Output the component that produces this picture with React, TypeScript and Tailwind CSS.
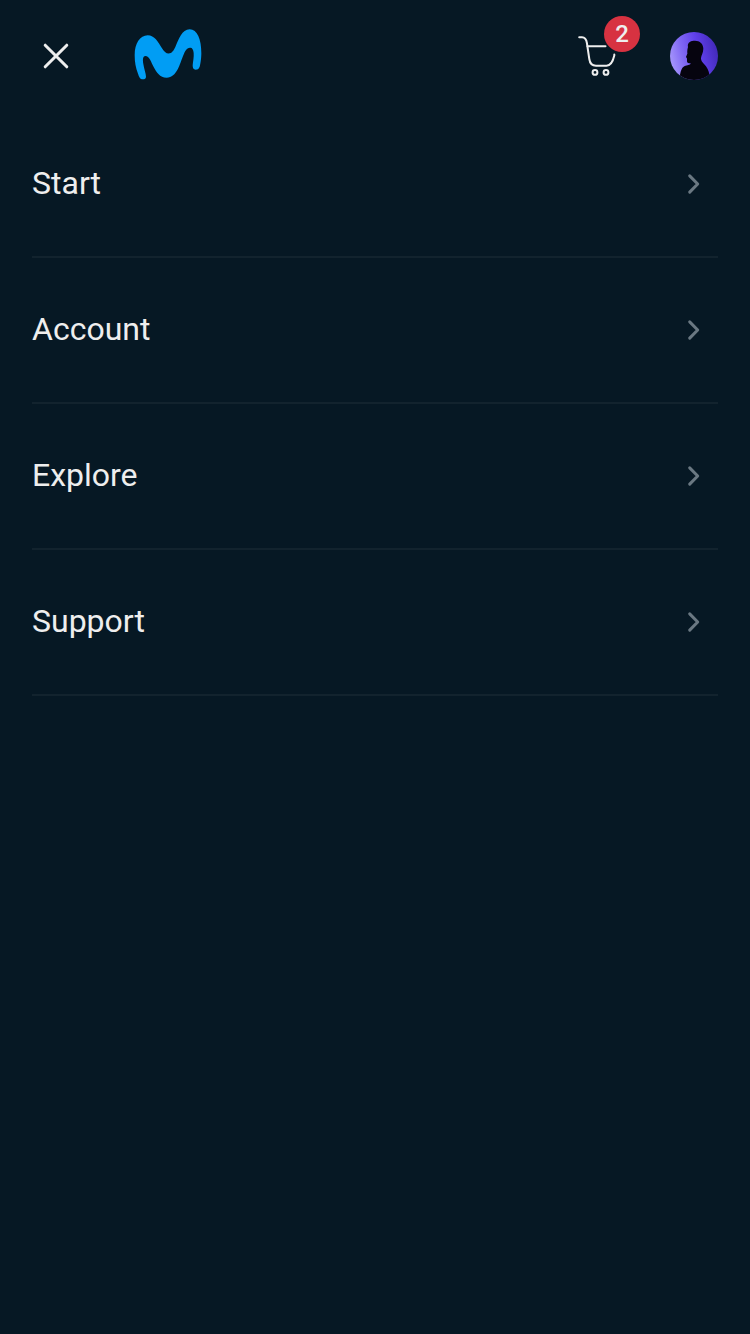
const items = ["Start", "Account", "Explore", "Support"];

function CloseIcon() {
  return (
    <svg width="48" height="48" viewBox="0 0 48 48" fill="none" stroke="#eeeeee" strokeWidth="3" strokeLinecap="round">
      <path d="M13.2 13.2 34.8 34.8M34.8 13.2 13.2 34.8" />
    </svg>
  );
}

function Logo() {
  return (
    <svg width="86" height="70" viewBox="0 0 258 210" fill="#019df4">
      <path d="M68 46C89 46 99 66 110 83C117 94 123 100.5 131 100.5C140 100.5 146 92 151 81C161 58 171 28 194 28C217 28 229 58 229 99C229 116 226 133 224 140C221 147 217 149 212 149C205 149 203 144 203 136C204 124 207 111 206 99C205 88 201 82 195 83C184 84 180 94 175 106C164 132 156 173 125 173C104 173 95 157 86 141C79 128 73 108 61 108C53 109 53 119 55 132C57 147 63 160 63 170C63 176 59 178 54 178C45 178 42 170 39 161C32 143 29 127 29 105C29 71 45 46 68 46Z" />
    </svg>
  );
}

function CartIcon() {
  return (
    <svg width="48" height="48" viewBox="0 0 48 48" fill="none" stroke="#eeeeee" strokeWidth="2" strokeLinecap="round" strokeLinejoin="round">
      <path d="M5.2 5.3H8C11.5 5.3 12.4 7.8 12.9 11L15.3 27C15.9 31.5 18 33.7 22 33.7H32.5C37 33.7 38.8 30 40.3 23.5V22.5" />
      <path d="M13.5 14.3H31.5" />
      <circle cx="21" cy="40.4" r="2.4" />
      <circle cx="32" cy="40.4" r="2.4" />
    </svg>
  );
}

function Avatar() {
  return (
    <svg width="48" height="48" viewBox="0 0 48 48">
      <defs>
        <linearGradient id="glow" x1="0" y1="0.65" x2="1" y2="0.4">
          <stop offset="0" stopColor="#a898fc" />
          <stop offset="0.3" stopColor="#8068f4" />
          <stop offset="0.62" stopColor="#6040ea" />
          <stop offset="1" stopColor="#4229b8" />
        </linearGradient>
        <clipPath id="disc">
          <circle cx="24" cy="24" r="24" />
        </clipPath>
      </defs>
      <g clipPath="url(#disc)">
        <rect width="48" height="48" fill="url(#glow)" />
        <path
          d="M18 15C17 10.5 20.5 8.7 25 8.7C30 8.7 33.5 12 33.3 17C33.2 21 31.3 23 31 26C30.9 28.5 32 29.8 34 32C37 35 38.5 38 39.5 43V49H10V43C11 38 12 35 15.5 33.8C18.5 32.8 20.5 33 20.7 31.3C18.8 31.3 17.2 31.2 17 29.5L17 26.5L16 25L17.4 21.5C17 19 17.4 17 18 15Z"
          fill="#06040f"
        />
      </g>
    </svg>
  );
}

function Chevron() {
  return (
    <svg width="48" height="48" viewBox="0 0 48 48" fill="none" stroke="#6a7882" strokeWidth="3" strokeLinecap="round" strokeLinejoin="round">
      <path d="M19.7 15.9 27.7 24 19.7 32.1" />
    </svg>
  );
}

export default function App() {
  return (
    <div className="min-h-[1334px] w-full bg-[#061824] font-['Roboto',sans-serif] text-[#eeeeee]">
      <header className="flex h-28 items-center px-8">
        <button aria-label="Close">
          <CloseIcon />
        </button>
        <div className="-mt-0.5 ml-[45px]">
          <Logo />
        </div>
        <div className="ml-auto flex items-center gap-12">
          <div className="relative">
            <CartIcon />
            <span className="absolute -top-4 left-[30px] flex size-9 items-center justify-center rounded-full bg-[#d73241] text-2xl font-medium">
              2
            </span>
          </div>
          <Avatar />
        </div>
      </header>
      <nav className="px-8">
        {items.map((item) => (
          <a key={item} className="flex h-[146px] items-center justify-between border-b-2 border-[#12232e] text-[32px] leading-[48px]">
            <span className="pb-0.5">{item}</span>
            <Chevron />
          </a>
        ))}
      </nav>
    </div>
  );
}
